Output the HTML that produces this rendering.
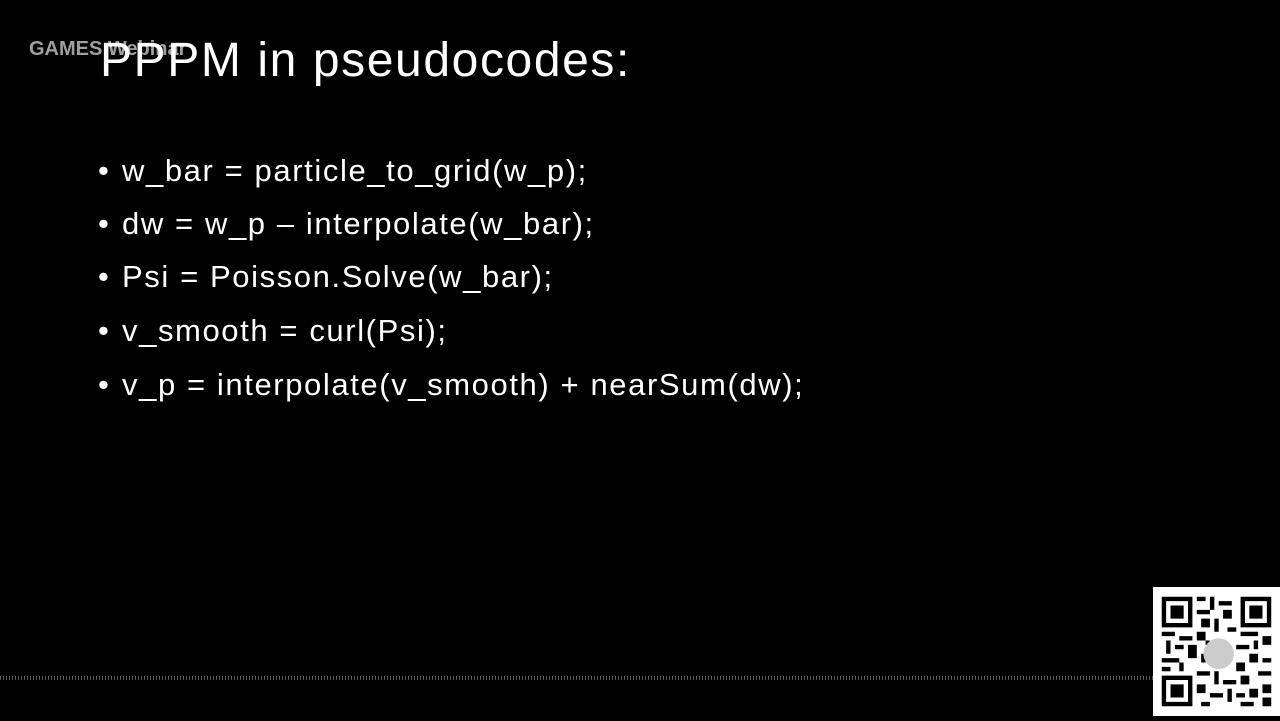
<!DOCTYPE html>
<html><head><meta charset="utf-8"><style>
body{margin:0;width:1280px;height:720px;background:#000;overflow:hidden;position:relative;font-family:"Liberation Sans",sans-serif;color:#fff}
.t{position:absolute;left:100px;top:33px;font-size:48px;white-space:nowrap;letter-spacing:1.6px}
.wm{position:absolute;left:29px;top:38px;font-size:20px;color:#bbb;font-weight:bold;opacity:.85}
.b{position:absolute;left:98px;font-size:31px;white-space:nowrap;letter-spacing:1.6px}
.b span{display:inline-block;width:24px;letter-spacing:0}
.dots{position:absolute;left:0;top:676px;width:1153px;height:4px;background:repeating-linear-gradient(90deg,#555 0 1px,transparent 1px 3px)}
.qr{position:absolute;left:1153px;top:587px;width:127px;height:129px;background:#fff}
</style></head><body>
<div class="wm">GAMES Webinar</div>
<div class="t">PPPM in pseudocodes:</div>
<div class="b" style="top:153px"><span>•</span>w_bar = particle_to_grid(w_p);</div>
<div class="b" style="top:206px"><span>•</span>dw = w_p – interpolate(w_bar);</div>
<div class="b" style="top:259px"><span>•</span>Psi = Poisson.Solve(w_bar);</div>
<div class="b" style="top:313px"><span>•</span>v_smooth = curl(Psi);</div>
<div class="b" style="top:367px"><span>•</span>v_p = interpolate(v_smooth) + nearSum(dw);</div>
<div class="dots"></div>
<div class="qr"><svg width="127" height="129" viewBox="0 0 29 29">
<g fill="#000">
<path d="M2 2h7v7h-7zM3 3v5h5v-5zM4 4h3v3h-3z" fill-rule="evenodd"/>
<path d="M20 2h7v7h-7zM21 3v5h5v-5zM22 4h3v3h-3z" fill-rule="evenodd"/>
<path d="M2 20h7v7h-7zM3 21v5h5v-5zM4 22h3v3h-3z" fill-rule="evenodd"/>
<path d="M10 2h2v1h-2zM13 2h1v3h-1zM15 3h3v1h-3zM10 5h3v1h-3zM16 5h2v2h-2zM11 7h2v2h-2zM14 7h1v3h-1zM2 10h3v1h-3zM6 11h3v1h-3zM10 10h2v2h-2zM17 9h2v1h-2zM20 10h4v1h-4zM25 11h2v2h-2zM3 12h1v3h-1zM5 13h2v1h-2zM8 13h2v3h-2zM2 16h4v1h-4zM6 17h1v2h-1zM11 15h1v2h-1zM19 13h3v1h-3zM22 15h2v2h-2zM25 16h2v1h-2zM19 17h2v2h-2zM10 19h3v1h-3zM14 19h1v3h-1zM16 21h3v1h-3zM20 20h2v2h-2zM24 19h3v1h-3zM10 22h2v2h-2zM13 24h3v1h-3zM17 23h1v3h-1zM19 24h2v1h-2zM22 23h2v2h-2zM25 22h2v2h-2zM11 26h2v1h-2zM20 26h3v1h-3zM25 25h2v2h-2zM2 18h2v1h-2zM12 12h1v1h-1zM23 12h1v2h-1z"/>
</g>
<circle cx="15" cy="15" r="3.5" fill="#ccc"/>
</svg></div>
</body></html>
